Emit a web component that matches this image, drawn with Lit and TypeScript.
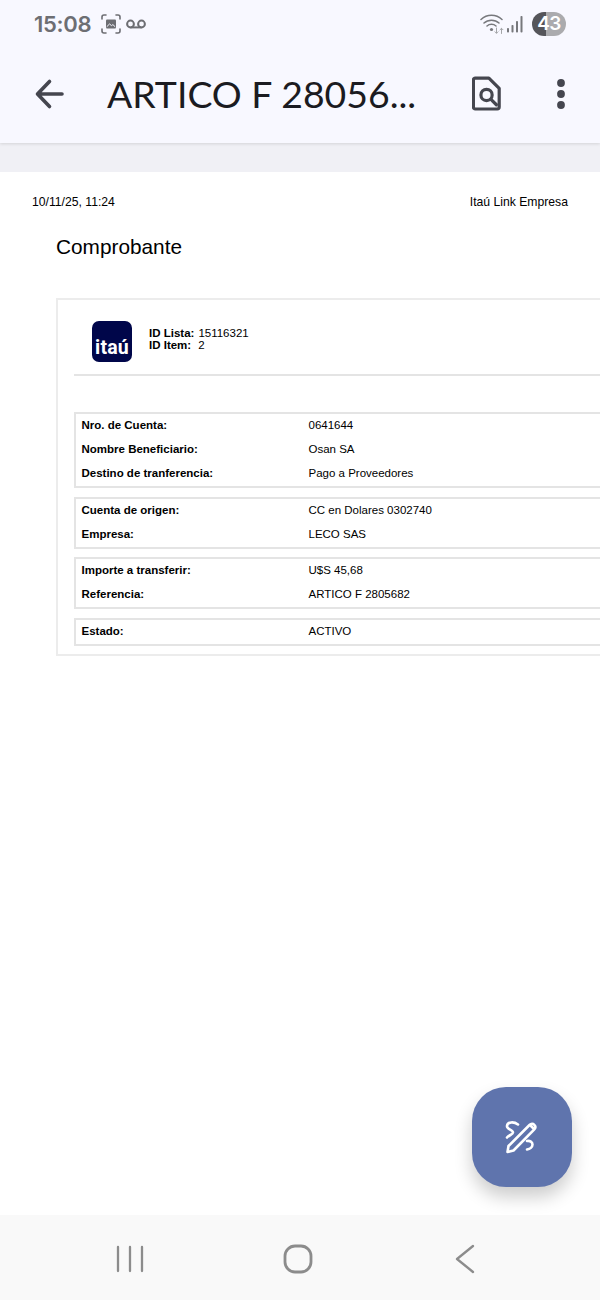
import { LitElement, html, css } from 'lit';
import { customElement } from 'lit/decorators.js';

type Row = [string, string];

const GROUPS: Row[][] = [
  [
    ['Nro. de Cuenta:', '0641644'],
    ['Nombre Beneficiario:', 'Osan SA'],
    ['Destino de tranferencia:', 'Pago a Proveedores'],
  ],
  [
    ['Cuenta de origen:', 'CC en Dolares 0302740'],
    ['Empresa:', 'LECO SAS'],
  ],
  [
    ['Importe a transferir:', 'U$S 45,68'],
    ['Referencia:', 'ARTICO F 2805682'],
  ],
  [['Estado:', 'ACTIVO']],
];

@customElement('app-root')
export class AppRoot extends LitElement {
  static styles = css`
    :host {
      display: flex; flex-direction: column; position: relative;
      width: 600px; height: 1300px; overflow: hidden;
      background: #fff; font-family: "Liberation Sans", Arial, sans-serif; color: #000;
    }

    .status {
      height: 48px; flex: none; background: #f8f8ff;
      display: flex; align-items: center; padding: 0 34px;
      color: #6d6e73; position: relative; z-index: 1;
    }
    .time { font: 600 22px/24px Inter, Roboto, sans-serif; letter-spacing: -0.3px; width: 67px; }
    .status svg { display: block; }
    .capture { margin-right: 5px; }
    .spacer { flex: 1; }
    .signal { margin: 0 9px 0 3px; }
    .battery {
      width: 34px; height: 24px; border-radius: 12px; position: relative; overflow: hidden;
      background: linear-gradient(90deg, #55555a 0 42%, #ababae 42% 100%);
      color: #fff; font: 600 19px/24px Inter, Roboto, sans-serif; text-align: center;
      letter-spacing: -0.5px;
    }

    .appbar {
      height: 95px; flex: none; background: #f8f8ff;
      display: flex; align-items: center; padding: 0 0 4px 34px; box-sizing: border-box;
      box-shadow: 0 1px 3px rgba(0,0,0,.12);
      position: relative;
    }
    .title {
      font: 400 37.4px/48px Lato, Roboto, sans-serif; color: #1b1b21;
      margin-left: 41px; width: 365px; white-space: nowrap;
    }
    .band { height: 29px; flex: none; background: #f0f0f5; }

    .page { flex: 1; min-height: 0; overflow: hidden; background: #fff; }
    .head {
      display: flex; justify-content: space-between;
      font-size: 12.2px; line-height: 14px; padding: 23px 32px 0;
    }
    h1 {
      margin: 26px 0 0 56px; font-weight: 400; font-size: 20.8px; line-height: 24px;
    }
    .card {
      margin: 39px 0 0 56px; width: 600px; box-sizing: border-box;
      border: 2px solid #ececec; padding: 0 16px 8.5px;
    }
    .brand {
      display: flex; align-items: center; gap: 17px;
      padding: 21px 0 12px 18px; border-bottom: 2px solid #e4e4e4;
    }
    .logo {
      width: 40px; height: 41px; border-radius: 7px; background: #00064a;
      color: #fff; font: 700 19.5px/1 Roboto, sans-serif; letter-spacing: .2px;
      display: flex; align-items: flex-end; justify-content: center; padding-bottom: 5px;
      box-sizing: border-box;
    }
    .ids { font-size: 11.5px; line-height: 12px; margin-top: -6px; }
    .ids b { margin-right: 4px; }
    .groups { display: flex; flex-direction: column; gap: 8.6px; margin-top: 36px; }
    .group { border: 2px solid #e4e4e4; border-right: none; }
    .row {
      display: grid; grid-template-columns: 227px 1fr; padding-left: 5.5px;
      font-size: 11.5px; line-height: 23px; height: 24px;
    }

    .fab {
      position: absolute; left: 472px; top: 1087px; width: 100px; height: 100px;
      border-radius: 34px; background: #5f74ad;
      box-shadow: 0 10px 18px rgba(0,0,0,.2);
      display: flex; align-items: center; justify-content: center;
    }

    .nav {
      height: 85px; flex: none; background: #f9f9f9; box-sizing: border-box;
      display: flex; align-items: center; justify-content: space-between;
      padding: 3px 124px 0 115px;
    }
    .nav svg { display: block; }
    .home { margin-right: 3px; }
  `;

  render() {
    return html`
      <div class="status">
        <span class="time">15:08</span>
        <svg class="capture" width="20" height="20" viewBox="0 0 20 20" fill="none" stroke="#6d6e73" stroke-width="1.6" stroke-linecap="round">
          <path d="M1 5V3a2 2 0 0 1 2-2h2M15 1h2a2 2 0 0 1 2 2v2M19 15v2a2 2 0 0 1-2 2h-2M5 19H3a2 2 0 0 1-2-2v-2"/>
          <rect x="5" y="5.5" width="10" height="9" rx="1" fill="#6d6e73" stroke="none"/>
          <path d="M6 12.5l2.5-2.5 2 1.6 1.4-1 2 1.9" stroke="#f8f8ff" stroke-width="1"/>
        </svg>
        <svg width="20" height="10" viewBox="0 0 20 10" fill="none" stroke="#6d6e73" stroke-width="2">
          <circle cx="4.5" cy="5" r="3.4"/><circle cx="15.5" cy="5" r="3.4"/><path d="M4.5 8.4h11"/>
        </svg>
        <span class="spacer"></span>
        <svg width="24" height="22" viewBox="0 0 24 22" fill="none" stroke="#77787c" stroke-width="1.5" stroke-linecap="round">
          <path d="M1 6.5c6-5.6 15-5.600 21 0M4 10c4-3.800 11-3.800 15 0M7 13c2.500-2.200 6.500-2.200 9 0"/>
          <circle cx="11.500" cy="16.500" r="1.600" fill="#77787c" stroke="none"/>
          <path d="M16.500 15v5M15 18.800l1.500 1.500 1.500-1.500M21.500 20.500v-5M20 16.800l1.500-1.500 1.500 1.500" stroke-width="1" stroke="#a4a5a8"/>
        </svg>
        <svg class="signal" width="16" height="17" viewBox="0 0 16 17" fill="#77787c">
          <rect x="0" y="12" width="2" height="4.500" rx=".8"/>
          <rect x="4.500" y="9" width="2" height="7.500" rx=".8"/>
          <rect x="9" y="5" width="2" height="11.500" rx=".8"/>
          <rect x="13.500" y="0" width="2" height="16.500" rx=".8"/>
        </svg>
        <span class="battery">43</span>
      </div>

      <div class="appbar">
        <svg width="32" height="32" viewBox="0 0 32 32" fill="none" stroke="#45464f" stroke-width="3.6" stroke-linecap="round" stroke-linejoin="round">
          <path d="M28 16H4.500M15.500 3.500 3.500 16l12 12.500"/>
        </svg>
        <span class="title">ARTICO F 28056...</span>
        <svg width="30" height="35" viewBox="0 0 32 37" fill="none" stroke="#45464f" stroke-width="3.400" stroke-linejoin="round" stroke-linecap="round">
          <path d="M3.500 2H18l11 11v20a2 2 0 0 1-2 2H3.500a2 2 0 0 1-2-2V4a2 2 0 0 1 2-2z"/>
          <circle cx="15.500" cy="20" r="6"/>
          <path d="M20 24.500l6 6"/>
        </svg>
        <svg style="margin-left:54px" width="10" height="32" viewBox="0 0 10 32" fill="#45464f">
          <circle cx="5" cy="5" r="3.900"/><circle cx="5" cy="16" r="3.900"/><circle cx="5" cy="27" r="3.900"/>
        </svg>
      </div>
      <div class="band"></div>

      <div class="page">
        <div class="head"><span>10/11/25, 11:24</span><span>Itaú Link Empresa</span></div>
        <h1>Comprobante</h1>
        <div class="card">
          <div class="brand">
            <div class="logo">itaú</div>
            <div class="ids">
              <div><b>ID Lista:</b>15116321</div>
              <div><b>ID Item:</b> 2</div>
            </div>
          </div>
          <div class="groups">
            ${GROUPS.map(g => html`
              <div class="group">
                ${g.map(([k, v]) => html`<div class="row"><b>${k}</b><span>${v}</span></div>`)}
              </div>`)}
          </div>
        </div>
      </div>

      <div class="fab">
        <svg width="36" height="36" viewBox="0 0 36 36" fill="none" stroke="#fff" stroke-width="2.600" stroke-linecap="round" stroke-linejoin="round">
          <path d="M3.500 33l1-6L25.500 6c1.500-1.500 3.500-1.500 4.800-.2s1.300 3.300-.2 4.800L9.500 31.500z"/>
          <path d="M26.500 6.500l3 3"/>
          <path d="M14 5.500C10 2.500 3.500 2.500 3 7c-.4 3.500 6 3.500 6 6.500 0 2-4 2.500-6 5"/>
          <path d="M23 22c3-.5 5.500 1 5.500 3.500S26 30 23 30.500"/>
        </svg>
      </div>

      <div class="nav">
        <svg width="30" height="28" viewBox="0 0 30 28" fill="none" stroke="#8c8c8c" stroke-width="2.300" stroke-linecap="round">
          <path d="M3 2v24M15 2v24M27 2v24"/>
        </svg>
        <svg class="home" width="30" height="30" viewBox="0 0 30 30" fill="none" stroke="#8c8c8c" stroke-width="2.800">
          <rect x="2" y="2" width="26" height="26" rx="10"/>
        </svg>
        <svg width="22" height="30" viewBox="0 0 22 30" fill="none" stroke="#8c8c8c" stroke-width="2.300" stroke-linecap="round" stroke-linejoin="round">
          <path d="M19 2 3 15l16 13"/>
        </svg>
      </div>
    `;
  }
}
